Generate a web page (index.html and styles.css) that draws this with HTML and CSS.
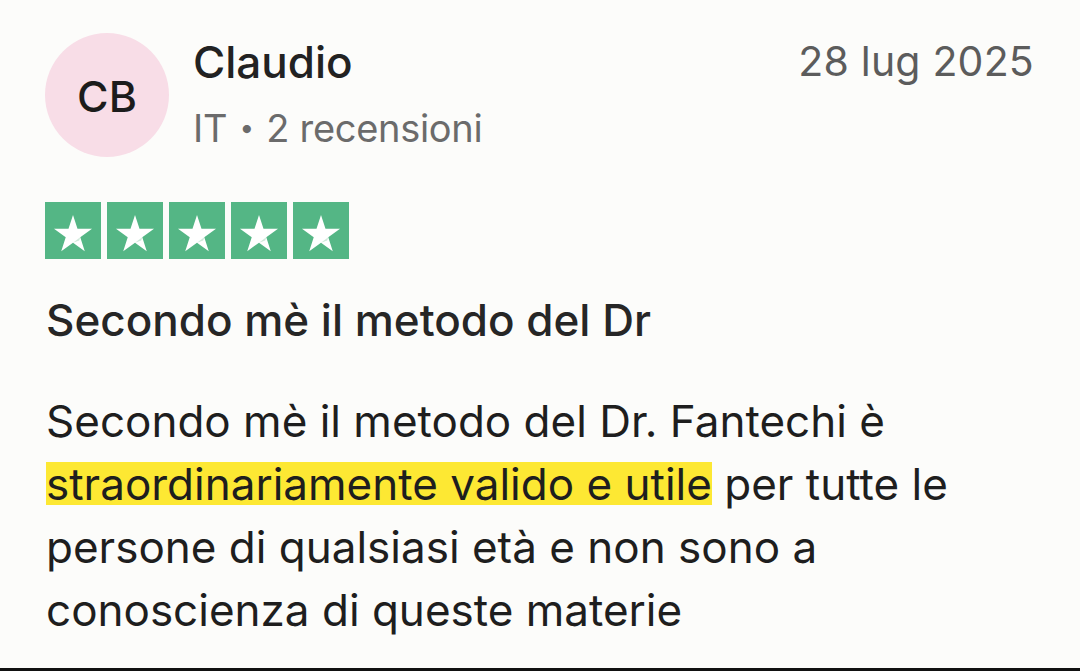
FILE: index.html
```html
<!DOCTYPE html>
<html lang="it">
<head>
  <meta charset="UTF-8">
  <title>Recensione - Claudio</title>
  <link rel="stylesheet" href="styles.css">
</head>
<body>
  <div class="review">
    <div class="review-head">
      <div class="avatar">CB</div>
      <div class="who">
        <div class="name">Claudio</div>
        <div class="meta">IT <span class="dot">•</span> 2 recensioni</div>
      </div>
      <div class="date">28 lug 2025</div>
    </div>

    <div class="stars">
      <span class="star"><svg viewBox="0 0 56 57"><polygon points="28,13 32.49,26.82 47.02,26.82 35.27,35.36 39.76,49.18 28,40.64 16.24,49.18 20.73,35.36 8.98,26.82 23.51,26.82" fill="#fff"/><polygon points="28,40.64 34.2,38.6 35.27,35.36" fill="#cfe9da"/></svg></span>
      <span class="star"><svg viewBox="0 0 56 57"><polygon points="28,13 32.49,26.82 47.02,26.82 35.27,35.36 39.76,49.18 28,40.64 16.24,49.18 20.73,35.36 8.98,26.82 23.51,26.82" fill="#fff"/><polygon points="28,40.64 34.2,38.6 35.27,35.36" fill="#cfe9da"/></svg></span>
      <span class="star"><svg viewBox="0 0 56 57"><polygon points="28,13 32.49,26.82 47.02,26.82 35.27,35.36 39.76,49.18 28,40.64 16.24,49.18 20.73,35.36 8.98,26.82 23.51,26.82" fill="#fff"/><polygon points="28,40.64 34.2,38.6 35.27,35.36" fill="#cfe9da"/></svg></span>
      <span class="star"><svg viewBox="0 0 56 57"><polygon points="28,13 32.49,26.82 47.02,26.82 35.27,35.36 39.76,49.18 28,40.64 16.24,49.18 20.73,35.36 8.98,26.82 23.51,26.82" fill="#fff"/><polygon points="28,40.64 34.2,38.6 35.27,35.36" fill="#cfe9da"/></svg></span>
      <span class="star"><svg viewBox="0 0 56 57"><polygon points="28,13 32.49,26.82 47.02,26.82 35.27,35.36 39.76,49.18 28,40.64 16.24,49.18 20.73,35.36 8.98,26.82 23.51,26.82" fill="#fff"/><polygon points="28,40.64 34.2,38.6 35.27,35.36" fill="#cfe9da"/></svg></span>
    </div>

    <h2 class="title">Secondo mè il metodo del Dr</h2>

    <p class="text">Secondo mè il metodo del Dr. Fantechi è <mark>straordinariamente valido e utile</mark> per tutte le persone di qualsiasi età e non sono a conoscienza di queste materie</p>
  </div>
</body>
</html>
```

FILE: styles.css
```css
html, body {
  height: 100%;
}
body {
  margin: 0;
  background: #fcfcfa;
  color: #1e1e1e;
  font-family: Inter, "Noto Sans", sans-serif;
  box-sizing: border-box;
  border-bottom: 3px solid #111;
}
.review {
  padding: 33px 46px 0 45px;
}
.review-head {
  display: flex;
  align-items: flex-start;
}
.avatar {
  width: 124px;
  height: 124px;
  border-radius: 50%;
  background: #f8dde7;
  display: flex;
  align-items: center;
  justify-content: center;
  font-size: 43px;
  font-weight: 500;
  color: #1c1c1c;
  flex-shrink: 0;
  padding-top: 2px;
  box-sizing: border-box;
}
.who {
  margin-left: 24px;
  flex: 1;
}
.name {
  font-size: 44px;
  font-weight: 500;
  line-height: 50px;
  margin-top: 4px;
  color: #222;
}
.meta {
  font-size: 38px;
  color: #6b6b6b;
  line-height: 50px;
  margin-top: 16px;
  letter-spacing: -0.3px;
}
.dot {
  font-size: 26px;
  vertical-align: 5px;
  margin: 0 2px;
}
.date {
  font-size: 41px;
  color: #5c5c5c;
  line-height: 50px;
  margin-top: 3px;
  letter-spacing: 0.2px;
}
.stars {
  display: flex;
  gap: 6px;
  margin-top: 45px;
}
.star {
  width: 56px;
  height: 57px;
  background: #54b685;
  display: block;
}
.star svg {
  width: 56px;
  height: 57px;
  display: block;
}
.title {
  font-size: 44px;
  font-weight: 550;
  color: #262626;
  margin: 35px 0 0 1px;
  line-height: 52px;
}
.text {
  font-size: 44px;
  line-height: 63px;
  margin: 44px 0 0 1px;
}
mark {
  background: linear-gradient(transparent 10%, #fde833 10%, #fde833 88%, transparent 88%);
  color: inherit;
}
```
